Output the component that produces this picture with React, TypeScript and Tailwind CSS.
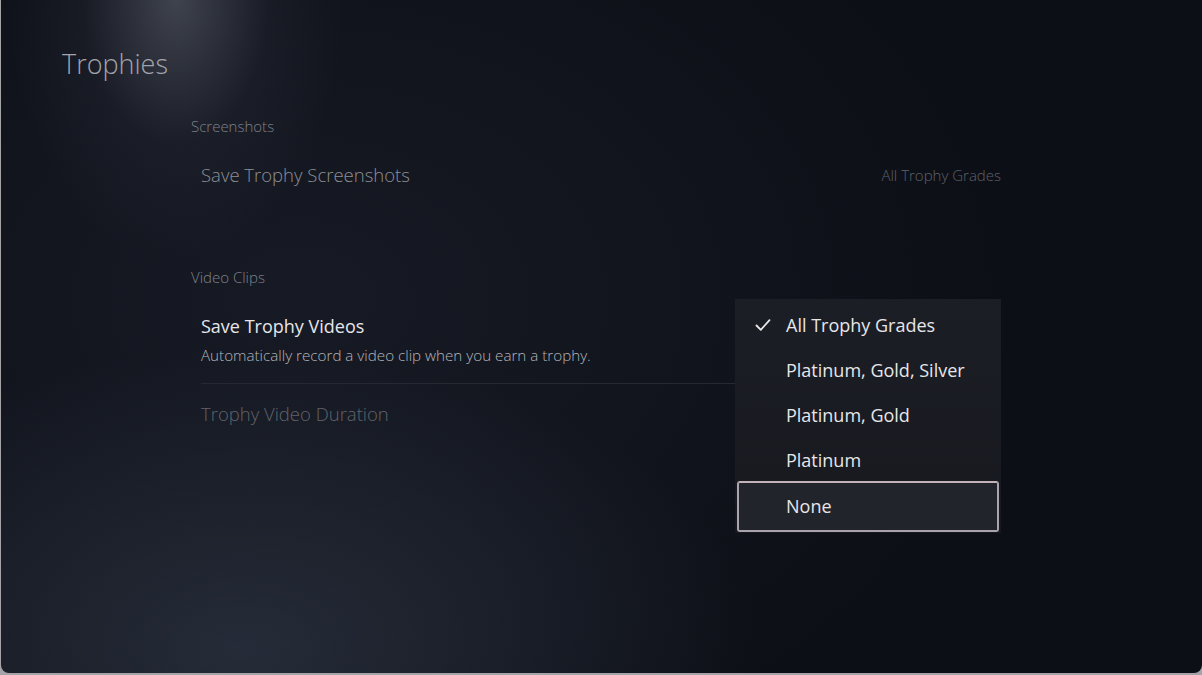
import React from "react";

const font = { fontFamily: '"Open Sans", "Noto Sans", sans-serif' };

function Check() {
  return (
    <svg width="16" height="14" viewBox="0 0 16 14" fill="none">
      <path d="M1.5 7.5 L5.8 11.8 L14.5 2.2" stroke="#e8e8ea" strokeWidth="1.8" strokeLinecap="round" strokeLinejoin="round" />
    </svg>
  );
}

export default function App() {
  const options = ["All Trophy Grades", "Platinum, Gold, Silver", "Platinum, Gold", "Platinum"];
  return (
    <div className="w-[1202px] h-[675px] bg-[#a4a4a8] overflow-hidden" style={font}>
      <div className="relative ml-[1px] w-[1201px] h-[673px] rounded-b-[8px] overflow-hidden bg-[#0c0f16] bg-[radial-gradient(ellipse_170px_260px_at_175px_0px,rgba(120,125,140,0.45),rgba(60,64,78,0.18)_55%,transparent_100%),radial-gradient(ellipse_520px_300px_at_240px_650px,rgba(45,52,66,0.75),transparent_100%),radial-gradient(ellipse_700px_500px_at_300px_300px,rgba(30,34,46,0.6),transparent_100%)]">
        <div className="pt-[46px] pl-[61px] text-[27px] leading-[36px] font-light text-[#a3a4ab]">Trophies</div>
        <div className="pl-[190px] mt-[34px] w-[1000px]">
          <div className="text-[15px] leading-[20px] font-light text-[#7f818a]">Screenshots</div>
          <div className="flex items-center justify-between pl-[10px] mt-[24px] h-[30px]">
            <span className="text-[18.5px] font-light text-[#8d8f97]">Save Trophy Screenshots</span>
            <span className="text-[15px] font-light text-[#5e616b]">All Trophy Grades</span>
          </div>
          <div className="text-[15px] leading-[20px] font-light text-[#7f818a] mt-[77px]">Video Clips</div>
          <div className="pl-[10px] mt-[26px]">
            <div className="text-[18px] leading-[26px] text-[#e6e6ea]">Save Trophy Videos</div>
            <div className="text-[15.2px] leading-[22px] font-light text-[#b4b5bb] mt-[5px]">
              Automatically record a video clip when you earn a trophy.
            </div>
            <div className="h-px bg-[#262931] mt-[17px] w-[540px]"></div>
            <div className="text-[18.5px] leading-[26px] font-light text-[#60636c] mt-[17px]">Trophy Video Duration</div>
          </div>
        </div>

        <div className="absolute left-[734px] top-[299px] w-[266px] pt-[4px] pb-[1px] bg-[#1a1c23] bg-[linear-gradient(180deg,#1c1e25,#17191f)]">
          {options.map((o, i) => (
            <div key={o} className="relative h-[45px] flex items-center pl-[51px] text-[18px] text-[#e6e6ea]">
              {i === 0 && (
                <span className="absolute left-[20px] top-[15px]">
                  <Check />
                </span>
              )}
              {o}
            </div>
          ))}
          <div className="mx-[2px] -mt-[2px] h-[51px] flex items-center pl-[47px] text-[18px] text-[#e6e6ea] border-2 border-[#a9a3ad] border-t-[#c2b3b8] rounded-[3px] bg-[#22242b]">
            None
          </div>
        </div>
      </div>
    </div>
  );
}
